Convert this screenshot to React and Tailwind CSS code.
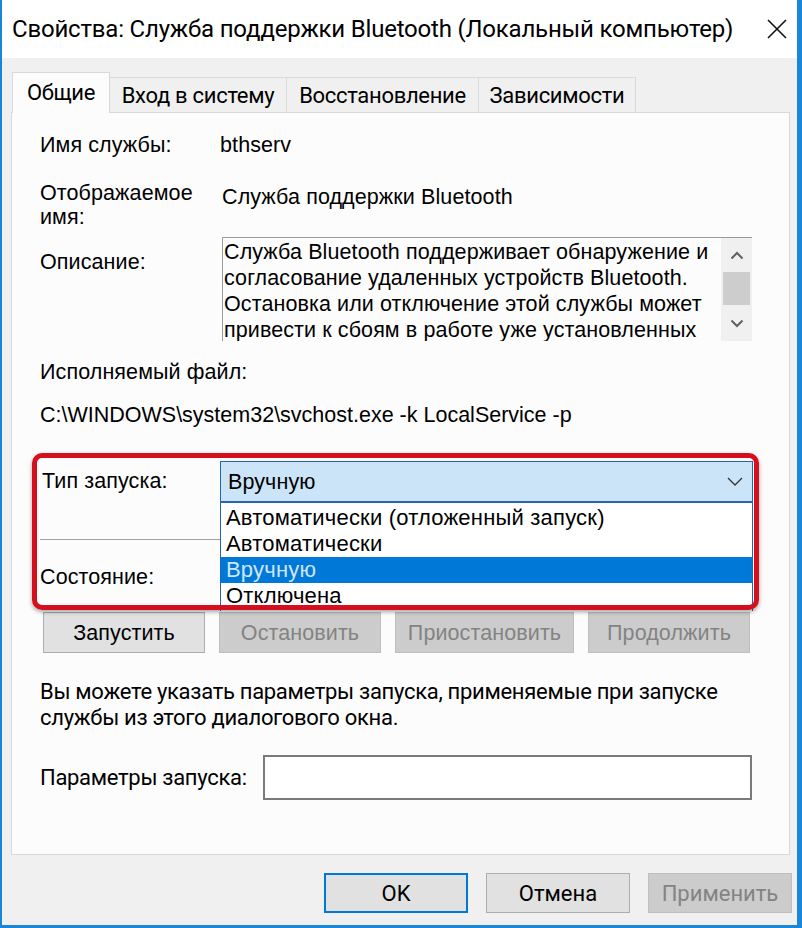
function Chevron({ up, className }) {
  return (
    <svg width="14" height="9" viewBox="0 0 14 9" className={className}>
      <path
        d={up ? "M1.5 7.5 L7 2 L12.5 7.5" : "M1.5 1.5 L7 7 L12.5 1.5"}
        fill="none"
        stroke="#606060"
        strokeWidth="2"
      />
    </svg>
  );
}

function Btn({ children, disabled, width = "w-[162px]" }) {
  return (
    <div
      className={`${width} h-[41px] flex items-center justify-center border ${
        disabled
          ? "bg-[#cccccc] border-[#bfbfbf] text-[#838383]"
          : "bg-[#e1e1e1] border-[#adadad] text-black"
      }`}
    >
      {children}
    </div>
  );
}

function App() {
  const tabs = [
    { name: "Вход в систему", w: "w-[177px]" },
    { name: "Восстановление", w: "w-[192px]" },
    { name: "Зависимости", w: "w-[157px]" },
  ];
  const options = [
    "Автоматически (отложенный запуск)",
    "Автоматически",
    "Вручную",
    "Отключена",
  ];

  return (
    <div className="w-[802px] h-[928px] bg-[#f0f0f0] border-l-2 border-r-[5px] border-b-[3px] border-[#1a86d9] flex flex-col overflow-hidden font-['Liberation_Sans',Arial,sans-serif] text-black">
      {/* title bar */}
      <div className="h-[58px] bg-white flex items-center pl-[10px] shrink-0">
        <span className="font-['Roboto',sans-serif] text-[24px] tracking-[-0.2px]">
          Свойства: Служба поддержки Bluetooth (Локальный компьютер)
        </span>
        <svg width="20" height="20" viewBox="0 0 20 20" className="ml-auto mr-[10px]">
          <path d="M1 1 L19 19 M19 1 L1 19" stroke="#111" strokeWidth="1.6" />
        </svg>
      </div>

      {/* tabs */}
      <div className="h-[54px] flex items-end pl-[10px] shrink-0 font-['Roboto',sans-serif] text-[22px] tracking-[-0.3px]">
        <div className="relative z-10 -mb-px w-[98px] h-[41px] bg-[#fcfcfc] border border-b-0 border-[#d9d9d9] flex items-center justify-center pb-[2px]">
          Общие
        </div>
        {tabs.map((t) => (
          <div
            key={t.name}
            className={`${t.w} h-[35px] border border-l-0 border-b-0 border-[#d9d9d9] flex items-center justify-center`}
          >
            {t.name}
          </div>
        ))}
      </div>

      {/* panel */}
      <div className="relative ml-[9px] w-[779px] h-[743px] shrink-0 bg-[#fcfcfc] border border-[#d9d9d9] pl-[28px] pt-[19px] text-[21.5px] leading-[26px] tracking-[0.1px]">
        <div className="flex">
          <div className="w-[180px]">Имя службы:</div>
          <div>bthserv</div>
        </div>

        <div className="flex mt-[23px]">
          <div className="w-[180px] leading-[24px]">
            Отображаемое
            <br />
            имя:
          </div>
          <div className="pt-[3px] ml-[2px]">Служба поддержки Bluetooth</div>
        </div>

        <div className="flex mt-[8px]">
          <div className="w-[182px] pt-[12px]">Описание:</div>
          <div className="w-[530px] h-[104px] flex border-t border-l border-[#9a9a9a] bg-[#fcfcfc]">
            <div className="flex-1 overflow-hidden pl-[1px] pt-[1px]">
              Служба Bluetooth поддерживает обнаружение и согласование удаленных
              устройств Bluetooth. Остановка или отключение этой службы может
              привести к сбоям в работе уже установленных устройств Bluetooth.
            </div>
            <div className="w-[31px] bg-[#f0f0f0] flex flex-col items-center">
              <div className="h-[34px] flex items-center justify-center">
                <Chevron up />
              </div>
              <div className="w-[27px] h-[33px] bg-[#cdcdcd]" />
              <div className="flex-1 flex items-center justify-center">
                <Chevron />
              </div>
            </div>
          </div>
        </div>

        <div className="mt-[18px]">Исполняемый файл:</div>
        <div className="mt-[17px] tracking-[0px]">C:\WINDOWS\system32\svchost.exe -k LocalService -p</div>

        {/* startup type group */}
        <div className="flex items-center h-[42px] mt-[33px]">
          <div className="w-[180px] pl-[2px] -mt-[2px]">Тип запуска:</div>
          <div className="w-[533px] h-[42px] bg-[#cce4f7] border border-b-2 border-[#2565ad] flex items-center pl-[7px] pr-[9px]">
            <span>Вручную</span>
            <svg width="16" height="9" viewBox="0 0 16 9" className="ml-auto">
              <path d="M1 1 L8 8 L15 1" fill="none" stroke="#333" strokeWidth="1.3" />
            </svg>
          </div>
        </div>

        <div className="mt-[36px] w-[712px] border-t border-[#a0a0a0]" />
        <div className="mt-[24px]">Состояние:</div>

        <div className="flex mt-[22px] ml-[3px] gap-[14px]">
          <Btn>Запустить</Btn>
          <Btn disabled>Остановить</Btn>
          <Btn disabled width="w-[179px]">Приостановить</Btn>
          <Btn disabled>Продолжить</Btn>
        </div>

        <div className="mt-[26px] font-['Roboto',sans-serif] text-[22px] tracking-[-0.3px]">
          Вы можете указать параметры запуска, применяемые при запуске
          <br />
          службы из этого диалогового окна.
        </div>

        <div className="flex items-center mt-[24px]">
          <div className="w-[223px] font-['Roboto',sans-serif] text-[22px] tracking-[-0.3px]">
            Параметры запуска:
          </div>
          <div className="w-[489px] h-[45px] bg-white border-2 border-[#7a7a7a]" />
        </div>

        {/* dropdown list */}
        <div className="absolute left-[208px] top-[390px] w-[533px] h-[108px] bg-white border-x border-[#2565ad] pt-[2px] text-[22px] leading-[26px] tracking-[0.2px]">
          {options.map((o) => (
            <div
              key={o}
              className={`pl-[5px] h-[26px] ${
                o === "Вручную" ? "bg-[#0078d7] text-[#cfe6fb]" : ""
              }`}
            >
              {o}
            </div>
          ))}
        </div>

        {/* red highlight */}
        <div className="absolute left-[20px] top-[340px] w-[727px] h-[157px] border-[5px] border-[#d4101e] rounded-[10px] shadow-[0_2px_4px_rgba(0,0,0,0.35)]" />
      </div>

      {/* footer buttons */}
      <div className="flex justify-end gap-[18px] pr-[5px] pt-[18px] font-['Roboto',sans-serif] text-[22px]">
        <div className="w-[144px] h-[40px] bg-[#e1e1e1] border-2 border-[#0078d7] flex items-center justify-center">
          OK
        </div>
        <div className="w-[144px] h-[40px] bg-[#e1e1e1] border border-[#adadad] flex items-center justify-center">
          Отмена
        </div>
        <div className="w-[144px] h-[40px] bg-[#cccccc] border border-[#bfbfbf] text-[#838383] flex items-center justify-center">
          Применить
        </div>
      </div>
    </div>
  );
}

export default App;
